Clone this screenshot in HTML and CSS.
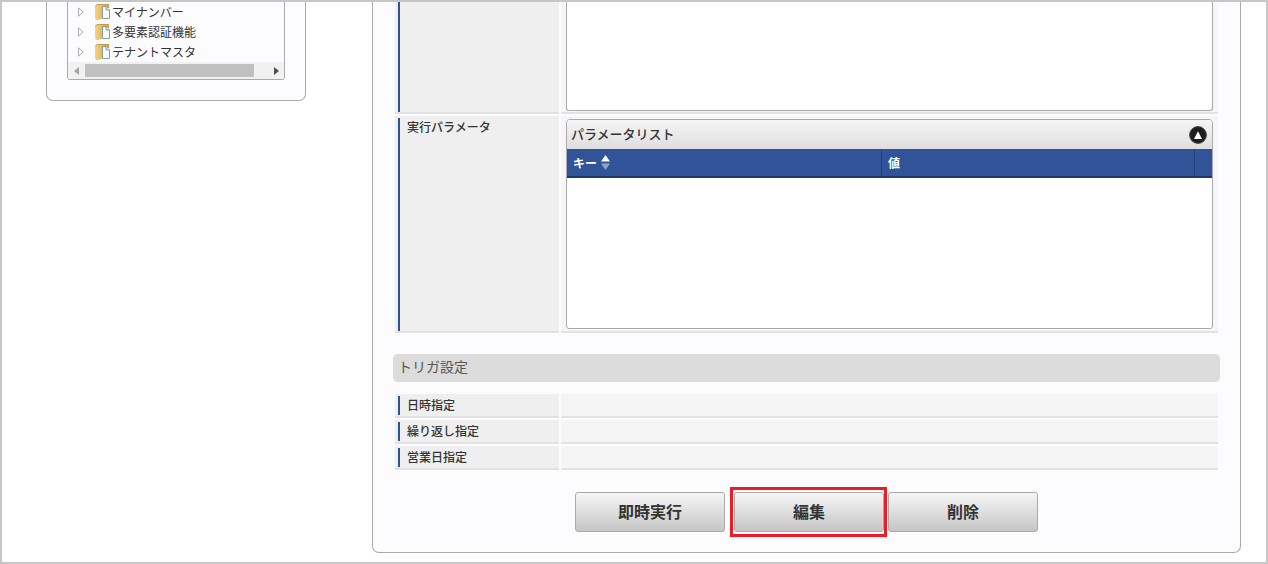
FILE: index.html
```html
<!DOCTYPE html>
<html lang="ja">
<head>
<meta charset="utf-8">
<title>ジョブスケジュール</title>
<link rel="stylesheet" href="styles.css">
</head>
<body>
<svg class="defs" width="0" height="0" aria-hidden="true">
  <defs>
    <linearGradient id="fold" x1="0" y1="0" x2="1" y2="0">
      <stop offset="0" stop-color="#f5d483"/>
      <stop offset="1" stop-color="#d99f3c"/>
    </linearGradient>
  </defs>
  <symbol id="folder" viewBox="0 0 15 16">
    <path d="M0 1.5 L2.5 0 H14 V4 H8 V14 L3.5 16 H1.5 L0 14.5 Z" fill="url(#fold)"/>
    <path d="M.5 1.8 L2.7 .5 H13.5" fill="none" stroke="#c89c48" stroke-width="1"/>
    <path d="M7.5 2.5 H11 L14.5 6 V14.5 H7.5 Z" fill="#f7fafa" stroke="#86a0a0" stroke-width="1"/>
    <path d="M11 2.5 V6 H14.5" fill="#dde8e8" stroke="#86a0a0" stroke-width="1"/>
  </symbol>
  <symbol id="twisty" viewBox="0 0 6 10">
    <path d="M.5 .8 L5.2 5 L.5 9.2 Z" fill="#fff" stroke="#adadad" stroke-width="1"/>
  </symbol>
</svg>
<div class="frame">
  <aside class="sidebar">
    <div class="tree">
      <ul class="tree-list">
        <li class="tree-item"><svg class="twisty"><use href="#twisty"/></svg><svg class="folder"><use href="#folder"/></svg><span>マイナンバー</span></li>
        <li class="tree-item"><svg class="twisty"><use href="#twisty"/></svg><svg class="folder"><use href="#folder"/></svg><span>多要素認証機能</span></li>
        <li class="tree-item"><svg class="twisty"><use href="#twisty"/></svg><svg class="folder"><use href="#folder"/></svg><span>テナントマスタ</span></li>
      </ul>
      <div class="hscroll">
        <span class="arrow arrow-left"></span>
        <span class="thumb"></span>
        <span class="arrow arrow-right"></span>
      </div>
    </div>
  </aside>
  <main class="panel">
    <div class="row row-first">
      <div class="label"><div class="label-inner"></div></div>
      <div class="value"><div class="textbox"></div></div>
    </div>
    <div class="row row-params">
      <div class="label"><div class="label-inner">実行パラメータ</div></div>
      <div class="value">
        <div class="grid-widget">
          <div class="grid-title">
            <span>パラメータリスト</span>
            <svg class="collapse" viewBox="0 0 18 18"><circle cx="9" cy="9" r="8.4" fill="#1d1d1d" stroke="#444" stroke-width="1"/><path d="M9 5.2 L13 13 H5 Z" fill="#fff"/></svg>
          </div>
          <div class="grid-head">
            <div class="col col-key">キー<svg class="sort" viewBox="0 0 9 15"><path d="M4.5 0 L9 6.5 H0 Z" fill="#fff"/><path d="M4.5 15 L0 8.5 H9 Z" fill="#8fa3cb"/></svg></div>
            <div class="col col-val">値</div>
            <div class="col col-end"></div>
          </div>
          <div class="grid-body"></div>
        </div>
      </div>
    </div>
    <h2 class="section">トリガ設定</h2>
    <div class="row row-small">
      <div class="label"><div class="label-inner">日時指定</div></div>
      <div class="value"></div>
    </div>
    <div class="row row-small">
      <div class="label"><div class="label-inner">繰り返し指定</div></div>
      <div class="value"></div>
    </div>
    <div class="row row-small">
      <div class="label"><div class="label-inner">営業日指定</div></div>
      <div class="value"></div>
    </div>
    <div class="actions">
      <button class="btn" type="button">即時実行</button>
      <button class="btn btn-marked" type="button">編集<span class="marker"></span></button>
      <button class="btn" type="button">削除</button>
    </div>
  </main>
</div>
</body>
</html>
```

FILE: styles.css
```css
* { box-sizing: border-box; }
html, body { margin: 0; padding: 0; }
body {
  font-family: "Noto Sans CJK JP", "Noto Sans", sans-serif;
  color: #333;
  background: #fff;
}
.defs { position: absolute; }
.frame {
  width: 1268px;
  height: 564px;
  border: 2px solid #c6c6c6;
  display: flex;
  align-items: flex-start;
  overflow: hidden;
}
.sidebar {
  width: 260px;
  height: 99px;
  margin-left: 44px;
  padding: 0 20px;
  background: #fcfcff;
  border: 1px solid #aaa;
  border-top: 0;
  border-radius: 0 0 7px 7px;
}
.tree {
  height: 78px;
  background: #fcfcff;
  border: 1px solid #aaa;
  border-top: 0;
  border-radius: 0 0 3px 3px;
  display: flex;
  flex-direction: column;
}
.tree-list {
  list-style: none;
  margin: 0;
  padding: 0;
  flex: 1;
}
.tree-item {
  height: 20px;
  display: flex;
  align-items: center;
  font-size: 12px;
  line-height: 20px;
  color: #333;
  padding-left: 10px;
}
.twisty { width: 6px; height: 10px; margin-right: 11px; }
.folder { width: 15px; height: 16px; margin-right: 2px; }
.hscroll {
  height: 17px;
  background: #f1f1f1;
  display: flex;
  align-items: center;
}
.thumb {
  width: 169px;
  height: 13px;
  background: #c0c0c0;
}
.arrow { width: 0; height: 0; border-style: solid; }
.arrow-left {
  border-width: 4px 5px 4px 0;
  border-color: transparent #a3a3a3 transparent transparent;
  margin: 0 6px 0 6px;
}
.arrow-right {
  border-width: 4px 0 4px 5px;
  border-color: transparent transparent transparent #505050;
  margin-left: 20px;
}
.panel {
  width: 869px;
  height: 551px;
  margin-left: 66px;
  padding: 0 22px;
  background: #fcfcff;
  border: 1px solid #aaa;
  border-top: 0;
  border-radius: 0 0 7px 7px;
  display: flex;
  flex-direction: column;
}
.row {
  display: grid;
  grid-template-columns: 164px 657px;
  column-gap: 2px;
}
.label, .value { border-bottom: 2px solid #e2e2e2; }
.label { background: #efefef; padding: 2px 0 0 3px; background-clip: padding-box; }
.value { background: #f6f6f8; background-clip: padding-box; padding: 0 5px 1px; }
.label-inner {
  height: 100%;
  border-left: 2px solid #2f5296;
  padding-left: 7px;
  font-size: 12px;
  font-weight: 500;
  line-height: 18px;
  color: #333;
}
.row-first { height: 112px; }
.row-first .label { padding-top: 0; }
.textbox {
  height: 109px;
  background: #fff;
  border: 1px solid #aaa;
  border-top: 0;
  border-radius: 0 0 3px 3px;
}
.row-params { height: 217px; margin-top: 2px; }
.row-params .value { padding-top: 3px; }
.grid-widget {
  height: 210px;
  display: flex;
  flex-direction: column;
  background: #fff;
  border: 1px solid #aaa;
  border-radius: 4px 4px 3px 3px;
}
.grid-title {
  height: 29px;
  display: flex;
  align-items: center;
  justify-content: space-between;
  padding: 0 5px 2px 4px;
  font-size: 13px;
  font-weight: 500;
  color: #333;
  background: linear-gradient(#f6f6f6, #dedede);
  border-radius: 3px 3px 0 0;
}
.collapse { width: 18px; height: 18px; margin-top: 2px; }
.grid-head {
  height: 29px;
  display: grid;
  grid-template-columns: 315px 313px 1fr;
  background: #315498;
  border-bottom: 2px solid #20376a;
  color: #fff;
  font-size: 12px;
  font-weight: 700;
  line-height: 27px;
}
.col { padding-left: 6px; border-right: 1px solid #24417c; display: flex; align-items: center; }
.col-end { border-right: 0; padding: 0; }
.sort { width: 9px; height: 15px; margin-left: 4px; }
.grid-body { flex: 1; }
.section {
  height: 28px;
  margin: 21px -2px 12px;
  padding-left: 5px;
  background: #dcdcdc;
  border-radius: 5px;
  font-size: 14px;
  font-weight: 400;
  line-height: 25px;
  color: #555;
}
.row-small { height: 24px; margin-bottom: 2px; }
.row-small .value { padding: 0; background: #f5f5f5; }
.row-small .label { padding: 2px 0 1px 3px; }
.actions {
  display: flex;
  justify-content: center;
  margin-top: 20px;
}
.btn {
  position: relative;
  width: 150px;
  height: 40px;
  padding: 0 0 2px;
  font: 700 16px/36px "Noto Sans CJK JP", sans-serif;
  color: #333;
  background: linear-gradient(#f6f6f6, #c6c6c6);
  border: 1px solid #aaa;
  border-radius: 3px;
}
.btn-marked { margin: 0 4px 0 9px; }
.marker {
  position: absolute;
  left: -5px;
  right: -4px;
  top: -6px;
  bottom: -6px;
  border: 3px solid #ed1c24;
}
```
